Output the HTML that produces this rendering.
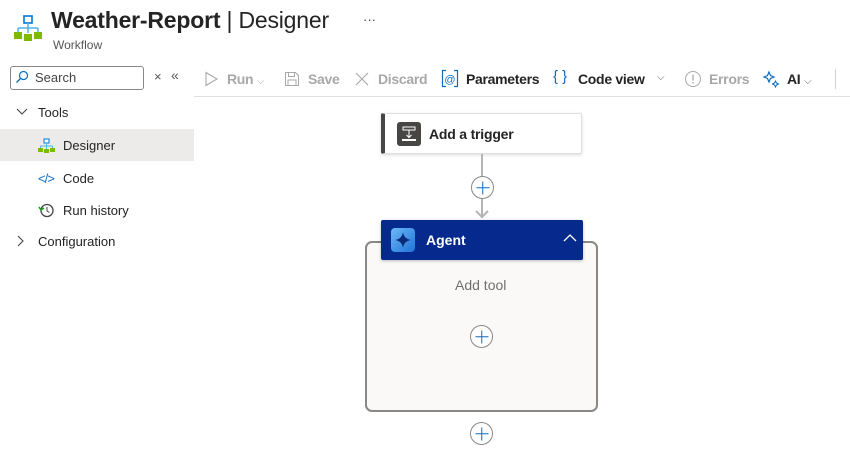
<!DOCTYPE html>
<html><head><meta charset="utf-8"><style>
*{box-sizing:border-box;margin:0;padding:0}
body{width:850px;height:460px;overflow:hidden;background:#fff;font-family:"Liberation Sans",sans-serif;color:#242424;position:relative}
.a{position:absolute}
.tb{font-size:14px;font-weight:bold;white-space:nowrap;letter-spacing:-0.3px}
.dis{color:#a8a8a8}
.plus{position:absolute;width:23px;height:23px;border-radius:50%;border:1px solid #8a8886;background:#fff}
.plus:before,.plus:after{content:"";position:absolute;background:#0f6cbd;left:50%;top:50%}
.plus:before{width:13px;height:1.5px;transform:translate(-50%,-50%)}
.plus:after{width:1.5px;height:13px;transform:translate(-50%,-50%)}
</style></head><body>
<svg class="a" style="left:14px;top:14px" width="28" height="30" viewBox="0 0 28 30">
<rect x="10" y="2" width="8" height="7" fill="#fff" stroke="#0078d4" stroke-width="1.6"/>
<path d="M14 9v5M4 14h20M4 14v5M14 14v5M24 14v5" stroke="#50b4e6" stroke-width="1.5" fill="none"/>
<rect x="0" y="18" width="8" height="7" fill="#7fba00"/><rect x="10" y="20" width="8" height="7" fill="#7fba00"/><rect x="20" y="18" width="8" height="7" fill="#7fba00"/>
</svg>
<div class="a" style="left:51px;top:7px;font-size:23px;white-space:nowrap;letter-spacing:-0.2px"><b>Weather-Report</b> | Designer</div>
<div class="a" style="left:363px;top:12px;font-size:13px;color:#444">···</div>
<div class="a" style="left:53px;top:38px;font-size:12px;color:#555">Workflow</div>
<div class="a" style="left:10px;top:66px;width:134px;height:24px;border:1px solid #8a8886;border-radius:3px"></div>
<svg class="a" style="left:15px;top:70px" width="14" height="14"><circle cx="8.5" cy="5.5" r="4" fill="none" stroke="#0f6cbd" stroke-width="1.2"/><path d="M5.5 8.5L1.5 12.5" stroke="#0f6cbd" stroke-width="1.3"/></svg>
<div class="a" style="left:35px;top:70px;font-size:13px;color:#444">Search</div>
<div class="a" style="left:154px;top:69px;font-size:13px;color:#555">×</div>
<div class="a" style="left:171px;top:67px;font-size:14px;color:#555">«</div>
<svg class="a" style="left:16px;top:107px" width="12" height="10"><path d="M1 2l5 5 5-5" stroke="#444" fill="none" stroke-width="1.1"/></svg>
<div class="a" style="left:38px;top:105px;font-size:13px">Tools</div>
<div class="a" style="left:0;top:129px;width:194px;height:32px;background:#edebe9"></div>
<svg class="a" style="left:38px;top:138px" width="17" height="16" viewBox="0 0 17 16"><rect x="6" y="1" width="5" height="4" fill="#fff" stroke="#0078d4"/><path d="M8.5 5v3M2.5 8h12M2.5 8v3M8.5 8v3M14.5 8v3" stroke="#50b4e6"/><rect x="0" y="10" width="5" height="4" fill="#7fba00"/><rect x="6" y="11" width="5" height="4" fill="#7fba00"/><rect x="12" y="10" width="5" height="4" fill="#7fba00"/></svg>
<div class="a" style="left:63px;top:138px;font-size:13px">Designer</div>
<div class="a" style="left:38px;top:171px;font-size:13px;color:#0f6cbd;letter-spacing:-1px">&lt;/&gt;</div>
<div class="a" style="left:63px;top:171px;font-size:13px">Code</div>
<svg class="a" style="left:38px;top:202px" width="17" height="17"><circle cx="9" cy="8.5" r="6" fill="none" stroke="#444" stroke-width="1.3"/><path d="M9 5v4l2.5 1.5" stroke="#444" fill="none"/><path d="M1 5l2 3 3-2" stroke="#13a10e" stroke-width="1.5" fill="none"/></svg>
<div class="a" style="left:63px;top:203px;font-size:13px">Run history</div>
<svg class="a" style="left:16px;top:235px" width="10" height="12"><path d="M2 1l5 5-5 5" stroke="#444" fill="none" stroke-width="1.1"/></svg>
<div class="a" style="left:38px;top:234px;font-size:13px">Configuration</div>
<div class="a" style="left:194px;top:96px;width:656px;height:1px;background:#e0e0e0"></div>
<svg class="a" style="left:204px;top:71px" width="14" height="16"><path d="M2 1.5l11 6.5-11 6.5z" fill="none" stroke="#a8a8a8" stroke-width="1.1"/></svg>
<div class="a tb dis" style="left:227px;top:71px">Run <span style="font-weight:normal;font-size:10px">⌵</span></div>
<svg class="a" style="left:284px;top:71px" width="16" height="16"><path d="M1.5 1.5h10l3 3v10h-13z" fill="none" stroke="#a8a8a8"/><rect x="4.5" y="1.5" width="6" height="4" fill="none" stroke="#a8a8a8"/><rect x="4" y="9" width="8" height="5.5" fill="none" stroke="#a8a8a8"/></svg>
<div class="a tb dis" style="left:308px;top:71px">Save</div>
<svg class="a" style="left:355px;top:72px" width="14" height="14"><path d="M1 1l12 12M13 1L1 13" stroke="#a8a8a8" stroke-width="1.1"/></svg>
<div class="a tb dis" style="left:378px;top:71px">Discard</div>
<svg class="a" style="left:441px;top:69px" width="18" height="19"><path d="M5 1.5H1.5v16H5M13 1.5h3.5v16H13" stroke="#0f6cbd" fill="none" stroke-width="1.2"/><text x="9" y="14" font-size="11" text-anchor="middle" fill="#0f6cbd" font-family="Liberation Sans">@</text></svg>
<div class="a tb" style="left:466px;top:71px">Parameters</div>
<div class="a" style="left:553px;top:68px;font-size:15px;color:#0f6cbd">{ }</div>
<div class="a tb" style="left:578px;top:71px">Code view</div>
<div class="a" style="left:657px;top:72px;font-size:10px;color:#666">⌵</div>
<svg class="a" style="left:684px;top:70px" width="18" height="18"><circle cx="9" cy="9" r="7.5" fill="none" stroke="#a8a8a8"/><path d="M9 4.5v6M9 12v1.5" stroke="#a8a8a8" stroke-width="1.3"/></svg>
<div class="a tb dis" style="left:709px;top:71px">Errors</div>
<svg class="a" style="left:762px;top:70px" width="18" height="18"><path d="M7 2l1.5 3.5L12 7l-3.5 1.5L7 12 5.5 8.5 2 7l3.5-1.5z" fill="none" stroke="#0f6cbd" stroke-width="1.2"/><path d="M13.5 11l1 2 2 1-2 1-1 2-1-2-2-1 2-1z" fill="none" stroke="#0f6cbd"/></svg>
<div class="a tb" style="left:787px;top:71px">AI <span style="font-weight:normal;font-size:10px;color:#666">⌵</span></div>
<div class="a" style="left:835px;top:69px;width:1px;height:20px;background:#d0d0d0"></div>
<div class="a" style="left:381px;top:113px;width:201px;height:41px;background:#fff;border:1px solid #e1dfdd;border-left:4px solid #484644;box-shadow:0 1px 3px rgba(0,0,0,.15);border-radius:2px"></div>
<div class="a" style="left:397px;top:122px;width:24px;height:24px;background:#484644;border-radius:3px"></div>
<svg class="a" style="left:397px;top:122px" width="24" height="24"><rect x="6" y="5" width="12" height="3" fill="none" stroke="#fff"/><path d="M12 8v7M9.5 13l2.5 2.5 2.5-2.5" stroke="#fff" fill="none"/><rect x="5" y="17" width="14" height="2" fill="#fff"/></svg>
<div class="a" style="left:429px;top:126px;font-size:14px;font-weight:bold;letter-spacing:-0.2px">Add a trigger</div>
<div class="a" style="left:481px;top:154px;width:2px;height:64px;background:#b5b5b5"></div>
<svg class="a" style="left:475px;top:208px" width="14" height="12"><path d="M1 3l6 6 6-6" stroke="#b5b5b5" stroke-width="2" fill="none"/></svg>
<div class="plus" style="left:471px;top:176px"></div>
<div class="a" style="left:365px;top:241px;width:233px;height:171px;background:#faf9f8;border:2px solid #8a8886;border-radius:7px"></div>
<div class="a" style="left:381px;top:220px;width:202px;height:40px;background:#05298d;border-radius:2px;box-shadow:0 1px 3px rgba(0,0,0,.25)"></div>
<div class="a" style="left:391px;top:228px;width:24px;height:24px;border-radius:4px;background:linear-gradient(135deg,#6cb8f6,#1e74d8)"></div>
<svg class="a" style="left:391px;top:228px" width="24" height="24"><path d="M12 4Q13 11 20 12Q13 13 12 20Q11 13 4 12Q11 11 12 4z" fill="#0a2a7a"/></svg>
<div class="a" style="left:426px;top:232px;font-size:14px;font-weight:bold;color:#fff">Agent</div>
<svg class="a" style="left:563px;top:233px" width="14" height="10"><path d="M1 8l6-6 6 6" stroke="#fff" fill="none" stroke-width="1.3"/></svg>
<div class="a" style="left:455px;top:277px;font-size:14px;color:#707070">Add tool</div>
<div class="plus" style="left:470px;top:325px"></div>
<div class="plus" style="left:470px;top:422px"></div>
</body></html>
